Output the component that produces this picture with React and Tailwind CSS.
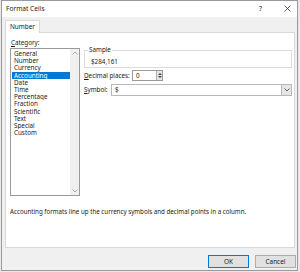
import React from "react";

const items = ["General","Number","Currency","Accounting","Date","Time","Percentage","Fraction","Scientific","Text","Special","Custom"];

export default function App() {
  return (
    <div className="w-[300px] h-[272px] bg-[#e8e8e8] overflow-hidden" style={{fontFamily: '"Noto Sans", "Open Sans", sans-serif'}}>
      <div className="ml-[1px] w-[297px] h-[271px] border border-[#9a9a9a] bg-[#f0f0f0] flex flex-col text-[#1a1a1a]">
        {/* title bar */}
        <div className="h-[16px] bg-white flex items-center pl-[4px] pr-[6px] text-[6.6px] shrink-0">
          <span>Format Cells</span>
          <span className="ml-auto mr-[22px] text-[7px]">?</span>
          <svg width="7" height="7" viewBox="0 0 7 7" className="mb-[1px]"><path d="M0.5 0.5 L6.5 6.5 M6.5 0.5 L0.5 6.5" stroke="#333" strokeWidth="0.8" /></svg>
        </div>
        <div className="pl-[3px] pr-[1px] flex flex-col">
          {/* tab */}
          <div className="mt-[3px] flex">
            <div className="w-[35px] h-[13px] bg-white border border-b-0 border-[#d9d9d9] flex items-center justify-center text-[6.4px] relative -mb-px z-10">Number</div>
          </div>
          {/* panel */}
          <div className="w-[290px] h-[216px] bg-white border border-[#d9d9d9] flex flex-col">
            <div className="flex pt-[6px] pl-[4px] text-[6.3px]">
              {/* left */}
              <div className="w-[70px] flex flex-col">
                <div className="leading-[8px] pl-[1px] h-[8px]"><span className="underline">C</span>ategory:</div>
                <div className="mt-[1px] w-[70px] h-[148px] border border-[#9a9a9a] flex">
                  <div className="flex-1 pt-[1px] pl-[1px] overflow-hidden">
                    {items.map((it) => (
                      <div key={it} className={it === "Accounting" ? "bg-[#0078d7] text-white pl-[2px] h-[7.2px] leading-[7.2px] overflow-hidden" : "pl-[2px] h-[7.2px] leading-[7.2px] overflow-hidden"}>{it}</div>
                    ))}
                  </div>
                  <div className="w-[9px] bg-[#f0f0f0] flex flex-col justify-between items-center py-[2px]">
                    <svg width="6" height="4" viewBox="0 0 6 4"><path d="M0.5 3.5 L3 1 L5.5 3.5" stroke="#a0a0a0" strokeWidth="0.9" fill="none"/></svg>
                    <svg width="6" height="4" viewBox="0 0 6 4"><path d="M0.5 0.5 L3 3 L5.5 0.5" stroke="#a0a0a0" strokeWidth="0.9" fill="none"/></svg>
                  </div>
                </div>
              </div>
              {/* right */}
              <div className="ml-[4px] w-[208px] flex flex-col">
                <div className="relative mt-[11px] h-[18px] border border-[#dcdcdc]">
                  <span className="absolute -top-[5px] left-[3px] bg-white px-[1px] leading-[8px]">Sample</span>
                  <div className="pl-[6px] pt-[7px] leading-[8px]">$284,161</div>
                </div>
                <div className="mt-[2px] flex items-center h-[11px]">
                  <span className="w-[48px] whitespace-nowrap"><span className="underline">D</span>ecimal places:</span>
                  <div className="w-[31px] h-[11px] border border-[#9a9a9a] flex items-center">
                    <span className="pl-[3px] flex-1">0</span>
                    <div className="w-[6px] h-full bg-[#e6e6e6] border-l border-[#b0b0b0] flex flex-col items-center justify-center gap-[1px]">
                      <svg width="4" height="2" viewBox="0 0 4 2"><path d="M0 2 L2 0 L4 2Z" fill="#444"/></svg>
                      <svg width="4" height="2" viewBox="0 0 4 2"><path d="M0 0 L2 2 L4 0Z" fill="#444"/></svg>
                    </div>
                  </div>
                </div>
                <div className="mt-[3px] flex items-center h-[12px]">
                  <span className="w-[27px] whitespace-nowrap"><span className="underline">S</span>ymbol:</span>
                  <div className="flex-1 h-[12px] border border-[#b8b8b8] flex items-center">
                    <span className="pl-[3px] flex-1">$</span>
                    <div className="w-[10px] h-full bg-[#e6e6e6] border-l border-[#b8b8b8] flex items-center justify-center">
                      <svg width="6" height="4" viewBox="0 0 6 4"><path d="M0.5 0.5 L3 3 L5.5 0.5" stroke="#555" strokeWidth="0.9" fill="none"/></svg>
                    </div>
                  </div>
                </div>
              </div>
            </div>
            <div className="mt-[12px] pl-[4px] text-[6.2px] leading-[8px] whitespace-nowrap">Accounting formats line up the currency symbols and decimal points in a column.</div>
          </div>
          {/* buttons */}
          <div className="mt-[7px] flex justify-end gap-[6px]">
            <div className="w-[41px] h-[13px] bg-[#e1e1e1] border border-[#0078d7] flex items-center justify-center text-[6.4px]">OK</div>
            <div className="w-[41px] h-[13px] bg-[#e1e1e1] border border-[#adadad] flex items-center justify-center text-[6.4px]">Cancel</div>
          </div>
        </div>
      </div>
    </div>
  );
}
